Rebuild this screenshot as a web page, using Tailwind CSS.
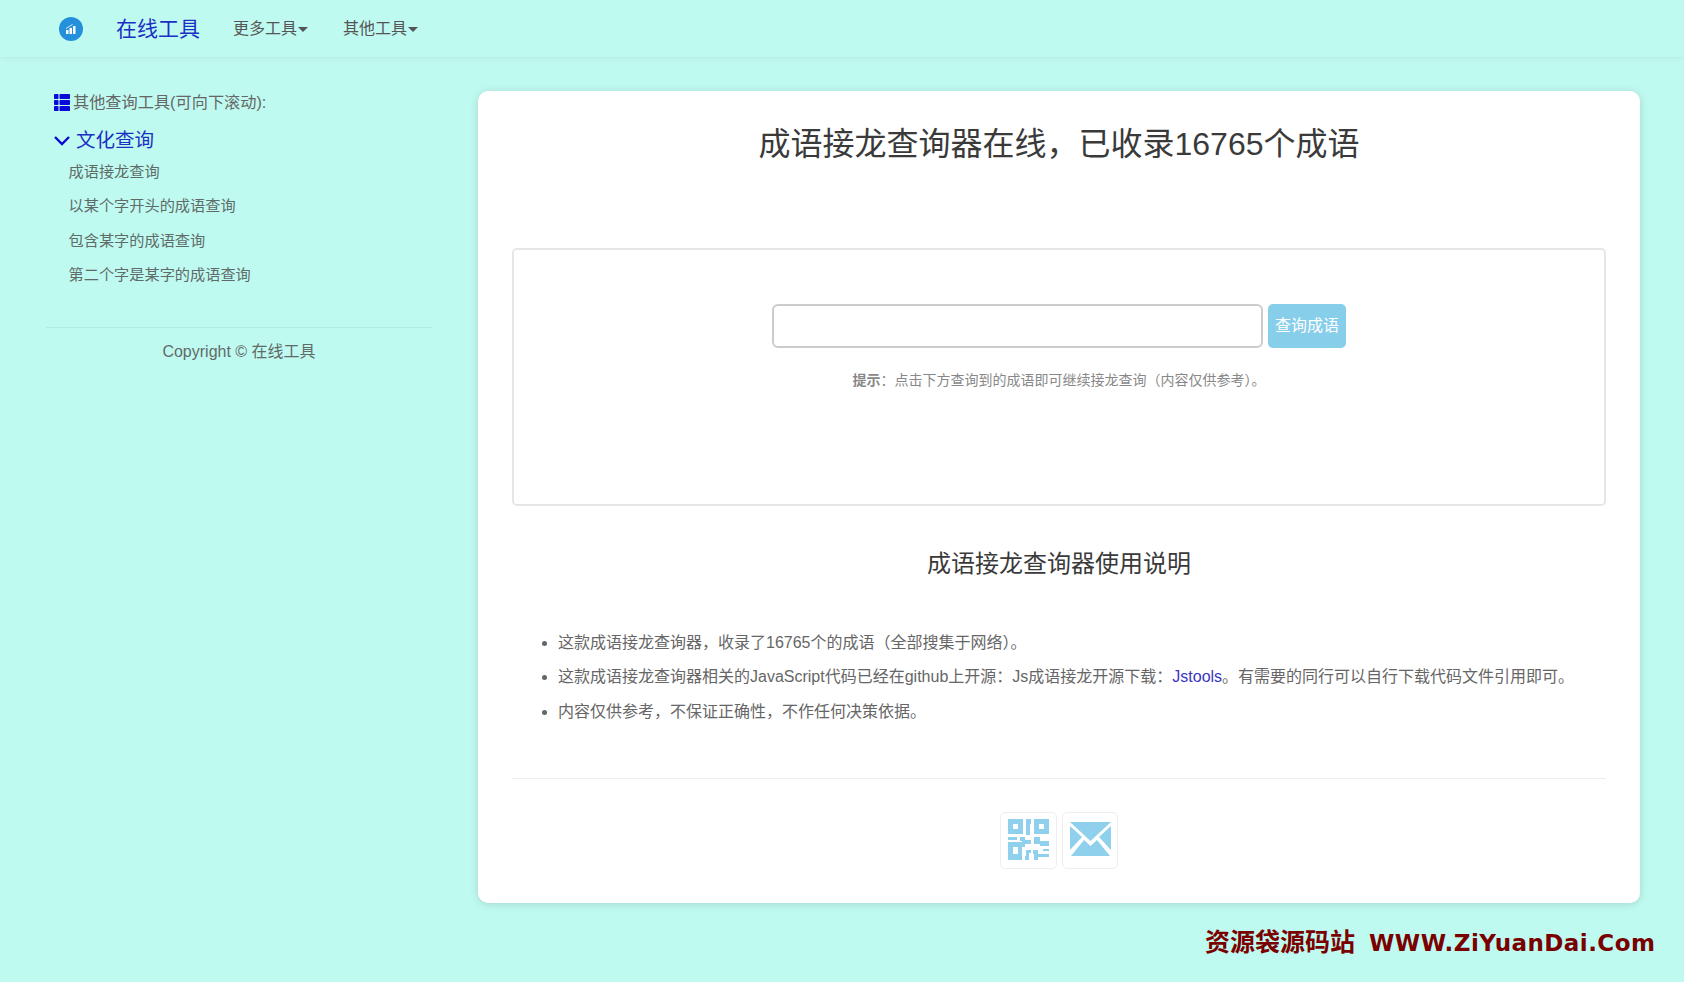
<!DOCTYPE html>
<html lang="zh-CN">
<head>
<meta charset="utf-8">
<title>成语接龙查询器</title>
<script src="https://cdn.jsdelivr.net/npm/@tailwindcss/browser@4"></script>
</head>
<body class="relative h-[982px] overflow-hidden bg-[#bffaf0] font-['Liberation_Sans','Noto_Sans_CJK_SC',sans-serif] text-[16px] text-[#666]">
<header class="flex h-[57px] items-center bg-[#bffaf0] shadow-[0_1px_5px_rgba(0,0,0,0.07)]">
  <a class="ml-[59px] flex h-6 w-6 items-center justify-center rounded-full bg-[#2490dc]">
    <svg class="h-3 w-3" viewBox="0 0 12 12" fill="#fff"><rect x="1" y="7" width="2.500" height="4"/><rect x="4.500" y="5" width="2.500" height="6"/><rect x="8" y="3" width="2.500" height="8"/><path d="M1 5.500 5 3l2.500-1.500" stroke="#fff" stroke-width=".8" fill="none"/></svg>
  </a>
  <a class="ml-[33px] text-[21px] text-[#1c2fc4]">在线工具</a>
  <a class="ml-[33px] flex items-center text-[#555]">更多工具<span class="ml-[1px] mt-[2px] h-0 w-0 border-x-[5px] border-t-[5px] border-x-transparent border-t-[#555]"></span></a>
  <a class="ml-[35px] flex items-center text-[#555]">其他工具<span class="ml-[1px] mt-[2px] h-0 w-0 border-x-[5px] border-t-[5px] border-x-transparent border-t-[#555]"></span></a>
</header>
<div class="flex">
  <aside class="w-[478px] shrink-0">
    <div class="ml-[54px] mt-[33px] flex h-6 items-center">
      <svg class="h-[17px] w-[16px]" viewBox="0 0 16 16" fill="#0a0ad8" preserveAspectRatio="none"><rect x="0" y="0" width="4.500" height="4.600" rx=".8"/><rect x="5.500" y="0" width="10.500" height="4.600" rx=".8"/><rect x="0" y="5.700" width="4.500" height="4.600" rx=".8"/><rect x="5.500" y="5.700" width="10.500" height="4.600" rx=".8"/><rect x="0" y="11.400" width="4.500" height="4.600" rx=".8"/><rect x="5.500" y="11.400" width="10.500" height="4.600" rx=".8"/></svg>
      <span class="ml-[3px] text-[16.200px]">其他查询工具(可向下滚动):</span>
    </div>
    <div class="ml-[54px] mt-[13px] flex h-7 items-center">
      <svg class="h-[16px] w-[16px]" viewBox="0 0 16 16" fill="none" stroke="#0a0ad0" stroke-width="2.400"><path d="M1 4 8 11 15 4"/></svg>
      <span class="ml-[6px] text-[19.500px] text-[#1c2fc4]">文化查询</span>
    </div>
    <ul class="ml-[68.500px] text-[15.200px] text-[#5f6b68]">
      <li class="flex h-[34.400px] items-center">成语接龙查询</li>
      <li class="flex h-[34.400px] items-center">以某个字开头的成语查询</li>
      <li class="flex h-[34.400px] items-center">包含某字的成语查询</li>
      <li class="flex h-[34.400px] items-center">第二个字是某字的成语查询</li>
    </ul>
    <div class="ml-[46px] mt-[34px] w-[386px] border-t border-[#b2ece1] pt-[12px] text-center leading-6 text-[#5f6b68]">Copyright © 在线工具</div>
  </aside>
  <main class="mt-[34px] h-[812px] w-[1162px] rounded-[10px] bg-white px-[34px] shadow-[0_1px_8px_rgba(0,0,0,0.15)]">
    <h1 class="pt-[29px] text-center text-[32px] leading-[48px] font-normal text-[#3a3a3a]">成语接龙查询器在线，已收录16765个成语</h1>
    <section class="mt-[80px] h-[258px] rounded-[5px] border-2 border-[#e6e6e6] pt-[54px]">
      <div class="flex justify-center gap-[5px]">
        <input class="h-[44px] w-[491px] rounded-[6px] border-2 border-[#ccc] bg-white" type="text">
        <button class="h-[44px] w-[78px] rounded-[5px] bg-[#87ceeb] text-white">查询成语</button>
      </div>
      <p class="mt-[22px] text-center text-[14px] leading-5 text-[#888]"><b class="font-bold">提示</b>：点击下方查询到的成语即可继续接龙查询（内容仅供参考）。</p>
    </section>
    <h2 class="mt-[40px] text-center text-[24px] leading-9 font-normal text-[#3a3a3a]">成语接龙查询器使用说明</h2>
    <ul class="ml-[46px] mt-[44px] list-disc text-[#666] marker:text-[#666]">
      <li class="h-[34.400px] leading-[34px]">这款成语接龙查询器，收录了16765个的成语（全部搜集于网络）。</li>
      <li class="h-[34.400px] leading-[34px]">这款成语接龙查询器相关的JavaScript代码已经在github上开源：Js成语接龙开源下载：<a class="text-[#3a35c0]">Jstools</a>。有需要的同行可以自行下载代码文件引用即可。</li>
      <li class="h-[34.400px] leading-[34px]">内容仅供参考，不保证正确性，不作任何决策依据。</li>
    </ul>
    <div class="mt-[49px] border-t border-[#eee]"></div>
    <div class="mt-[33px] flex justify-center gap-[5px]">
      <div class="flex h-[57px] w-[57px] items-center justify-center rounded-[5px] border border-[#eee] pb-[2px]">
        <svg class="h-[41px] w-[41px]" viewBox="0 0 41 41" fill="#8fd0ec">
          <path fill-rule="evenodd" d="M0 0h15v15H0zM5 5v5h5V5zM26 0h15v15H26zM31 5v5h5V5zM18 0h5v5h-1v11h-4zM0 18h9v3H0zM12 18h5v3h6v4h-6v3h-3v-6h-2zM0 23h14v18H0zM5 28v7h5v-7zM26 18h6v4h9v5H32v-2h-6zM18 31h5v3h-2v7h-4v-4h1zM25 31h5v4h11v3H30v3h-4v-6h-1zM35 30h6v2h-6z"/>
        </svg>
      </div>
      <div class="flex h-[57px] w-[56px] items-center justify-center rounded-[5px] border border-[#eee] pb-[4px]">
        <svg class="h-[34px] w-[41px]" viewBox="0 0 41 34" fill="#8fd0ec">
          <path d="M0 0h41L20.500 19z"/><path d="M0 4 12 15 0 28z"/><path d="M41 4 29 15 41 28z"/><path d="M1 34 14 18l6.500 6L27 18l13 16z"/>
        </svg>
      </div>
    </div>
  </main>
</div>
<div class="absolute left-[1205px] top-[928px] flex h-[30px] items-center text-[#7a0000]">
  <span class="text-[25px] font-bold">资源袋源码站</span>
  <span class="ml-[14px] font-['DejaVu_Sans',sans-serif] text-[23px] font-bold tracking-[0.45px]">WWW.ZiYuanDai.Com</span>
</div>
</body>
</html>
